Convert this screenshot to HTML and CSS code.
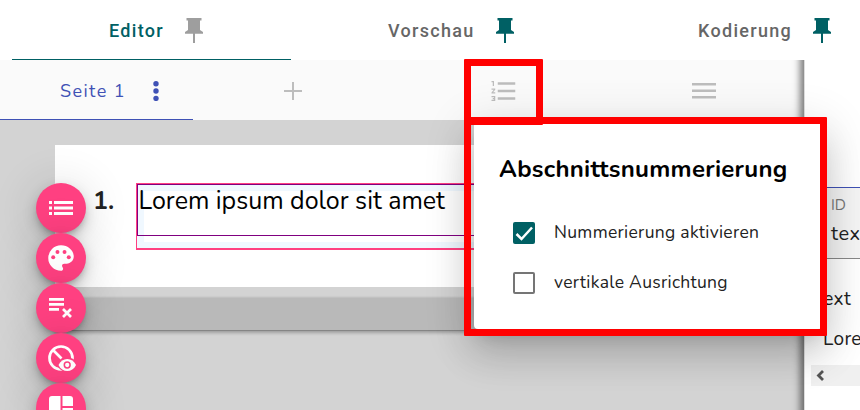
FILE: index.html
```html
<!DOCTYPE html>
<html lang="de">
<head>
<meta charset="utf-8">
<title>Editor</title>
<link rel="stylesheet" href="styles.css">
</head>
<body>
<div class="app">
  <header class="tabs">
    <div class="tab tab-editor active"><span class="label">Editor</span>
      <svg class="pin" viewBox="0 0 18 26"><path d="M1.500 0h15v2.500H15v9.500l3 2v1.800h-8V25H8v-9.200H0V14l3-2V2.500H1.500z"/></svg></div>
    <div class="tab tab-preview"><span class="label">Vorschau</span>
      <svg class="pin" viewBox="0 0 18 26"><path d="M1.500 0h15v2.500H15v9.500l3 2v1.800h-8V25H8v-9.200H0V14l3-2V2.500H1.500z"/></svg></div>
    <div class="tab tab-coding"><span class="label">Kodierung</span>
      <svg class="pin" viewBox="0 0 18 26"><path d="M1.500 0h15v2.500H15v9.500l3 2v1.800h-8V25H8v-9.200H0V14l3-2V2.500H1.500z"/></svg></div>
  </header>
  <main class="workspace">
    <section class="editor">
      <nav class="pages">
        <div class="page-tab"><span class="page-name">Seite 1</span>
          <svg class="dots" viewBox="0 0 6 20"><circle cx="3" cy="2.700" r="2.700"/><circle cx="3" cy="10" r="2.700"/><circle cx="3" cy="17.400" r="2.700"/></svg></div>
        <div class="tool add"><svg width="18" height="18" viewBox="0 0 18 18"><path d="M8 0h2v8h8v2h-8v8H8v-8H0V8h8z"/></svg></div>
        <div class="tool numbering"><svg width="30" height="30" viewBox="0 0 24 24"><path d="M2 17h2v.5H3v1h1v.5H2v1h3v-4H2v1zm1-9h1V4H2v1h1v3zm-1 3h1.800L2 13.100v.9h3v-1H3.200L5 10.900V10H2v1zm5-6v2h14V5H7zm0 14h14v-2H7v2zm0-6h14v-2H7v2z"/></svg></div>
        <div class="tool menu"><svg width="24" height="16" viewBox="0 0 24 16"><path d="M0 0h24v2.500H0zM0 6.500h24V9H0zM0 13h24v2.500H0z"/></svg></div>
      </nav>
      <div class="canvas">
        <div class="sheet">
          <div class="number">1.</div>
          <div class="section"><div class="element">Lorem ipsum dolor sit amet</div></div>
        </div>
        <div class="add-section"></div>
      </div>
    </section>
    <aside class="properties">
      <div class="field"><span class="field-label">ID</span><span class="field-value">text</span></div>
      <div class="prop prop-title">Text</div>
      <div class="prop prop-value">Lorem</div>
      <div class="scrollbar"><svg width="8" height="11" viewBox="0 0 8 11"><path d="M7 1 2.500 5.500 7 10" fill="none" stroke="#555" stroke-width="2.800"/></svg></div>
    </aside>
  </main>

  <div class="fabs">
    <button class="fab"><svg width="24" height="14" viewBox="0 0 24 14"><path d="M0 0h3v3H0zM5 0h19v3H5zM0 5.500h3v3H0zM5 5.500h19v3H5zM0 11h3v3H0zM5 11h19v3H5z"/></svg></button>
    <button class="fab"><svg width="34" height="34" viewBox="0 0 24 24"><path d="M12 3a9 9 0 0 0 0 18c.830 0 1.500-.670 1.500-1.500 0-.390-.150-.740-.390-1.010-.230-.260-.380-.610-.380-.990 0-.830.670-1.500 1.500-1.500H16c2.760 0 5-2.240 5-5 0-4.420-4.030-8-9-8z"/><g class="cut"><circle cx="6.500" cy="11.500" r="1.400"/><circle cx="9.500" cy="7.700" r="1.400"/><circle cx="14.500" cy="7.700" r="1.400"/><circle cx="17.500" cy="11.500" r="1.400"/></g></svg></button>
    <button class="fab"><svg width="24" height="22" viewBox="0 0 24 22"><path d="M0 1h15v2.700H0zM0 6h15v2.700H0zM0 11h10v2.700H0z"/><path class="line" d="m14 12 8 8m0-8-8 8"/></svg></button>
    <button class="fab"><svg class="eye" width="30" height="28" viewBox="0 0 30 28"><circle class="line" cx="14" cy="14" r="11.500"/><path class="line" d="m5.500 5.500 9 9"/><path class="halo" d="M10 21c4-10 17-10 21 0-4 9.500-17 9.500-21 0z"/><path d="M11.500 21c3.500-8 14-8 17.500 0-3.500 8-14 8-17.500 0z"/><circle class="iris" cx="20.200" cy="21" r="2.900"/></svg></button>
    <button class="fab"><svg width="24" height="24" viewBox="0 0 24 24"><path d="M3 0h8.500v24H3a3 3 0 0 1-3-3V3a3 3 0 0 1 3-3zM13.500 0H21a3 3 0 0 1 3 3v7H13.500zM13.500 12H24v9a3 3 0 0 1-3 3h-7.500z"/></svg></button>
  </div>

  <div class="dialog">
    <h2 class="dialog-title">Abschnittsnummerierung</h2>
    <label class="option"><span class="box checked"><svg width="22" height="22" viewBox="0 0 22 22"><path d="m3.500 12 5 5L19 5.500" fill="none" stroke="#fff" stroke-width="2.500"/></svg></span><span class="option-text">Nummerierung aktivieren</span></label>
    <label class="option"><span class="box"></span><span class="option-text">vertikale Ausrichtung</span></label>
  </div>
  <div class="mark mark-dialog"></div>
  <div class="mark mark-button"></div>
</div>
</body>
</html>
```
FILE: styles.css
```css
* { box-sizing: border-box; }
body { margin: 0; background: #fff; font-family: Nunito, Lato, sans-serif; color: #222; }
.app { position: relative; width: 860px; height: 410px; overflow: hidden; }
.tabs { display: flex; height: 60px; background: #fff; font: 500 18px/20px Roboto, sans-serif; letter-spacing: 1.3px; color: #666; }
.tab { display: flex; align-items: center; gap: 21px; height: 60px; padding-top: 2px; flex: none; }
.tab-editor { width: 279px; margin-left: 12px; padding-left: 97px; color: #006064; border-bottom: 1px solid #006064; }
.tab-preview { width: 310px; padding-left: 97px; }
.tab-coding { width: 259px; padding-left: 97px; }
.label { flex: none; }
.pin { width: 18px; height: 26px; fill: #006064; flex: none; }
.tab-editor .pin { fill: #9e9e9e; }
.workspace { display: flex; height: 350px; }
.editor { position: relative; width: 804px; height: 350px; flex: none; background: #d3d3d3; overflow: hidden; }
.editor::after { content: ""; position: absolute; inset: -20px 0 -20px -20px; box-shadow: inset -7px 0 7px -3px rgba(0,0,0,.5); }
.pages { display: flex; height: 60px; background: #fafafa; }
.page-tab { width: 193px; height: 60px; padding: 2px 0 0 60px; display: flex; align-items: center; border-bottom: 1px solid #3f51b5; color: #3f51b5; }
.page-name { width: 93px; font-size: 18px; letter-spacing: 1.4px; }
.dots { width: 6px; height: 20px; fill: #3f51b5; }
.tool { display: flex; align-items: center; justify-content: center; height: 62px; }
.tool svg { fill: #bdbdbd; }
.add { width: 200px; }
.numbering { width: 221px; }
.menu { width: 180px; }
.canvas { padding: 25px 0 0 55px; }
.sheet { display: flex; height: 142px; padding: 38px 0 0 38px; background: #fff; width: 749px; }
.number { width: 43px; font-size: 25px; line-height: 36px; font-weight: 700; }
.section { flex: 1; height: 67px; border: 2px solid #ff4081; border-top-width: 1px; border-left-width: 1px; background: linear-gradient(#fff, #fff) 7px 7px / 700px 51px no-repeat #f0f8ff; }
.element { height: 52px; border: 1px solid #800080; font-size: 25px; line-height: 32px; color: #000; padding-left: .5px; white-space: nowrap; }
.add-section { height: 33px; margin-top: 11px; background: #b9b9b9; border-bottom: 1px solid #858585; box-shadow: 0 2px 3px rgba(0,0,0,.25), 0 -1px 2px rgba(0,0,0,.1); }
.properties { width: 56px; height: 350px; padding: 127px 0 0 6px; overflow: hidden; white-space: nowrap; border-left: 1px solid #ddd; }
.field { height: 72px; border-top: 1px solid #3f51b5; border-bottom: 1px solid #888; background: #f5f5f5; padding: 7px 0 0 20px; display: flex; flex-direction: column; }
.field-label { color: #777; font-size: 15px; line-height: 20px; }
.field-value { font-size: 20px; line-height: 37px; letter-spacing: .5px; }
.prop { font-family: Nunito, "Noto Sans", sans-serif; font-size: 19px; line-height: 26px; letter-spacing: .3px; }
.prop-title { margin: 27px 0 0 2px; }
.prop-value { margin: 14px 0 0 12px; }
.scrollbar { margin-top: 13px; height: 21px; background: #f0f0f0; padding: 5px 5px; line-height: 0; }
.fabs { position: absolute; left: 36px; top: 183px; display: flex; flex-direction: column; }
.fab { width: 50px; height: 50px; padding: 0; border: 0; border-radius: 50%; background: #ff4081; display: flex; align-items: center; justify-content: center; box-shadow: 0 5px 7px -3px rgba(0,0,0,.3), 0 6px 14px 1px rgba(0,0,0,.14), 0 4px 42px 9px rgba(0,0,0,.09); }
.fab svg { fill: #fff; }
.fab .cut, .fab .halo { fill: #ff4081; }
.fab .line { fill: none; stroke: #fff; stroke-width: 2.700; }
.fab .iris { fill: #fff; stroke: #ff4081; stroke-width: 1.500; }
.fab .eye { margin-left: 2px; }
.dialog { position: absolute; left: 474px; top: 122px; width: 348px; height: 207px; padding: 32px 0 0 25px; background: #fff; border-radius: 4px; box-shadow: 0 11px 15px -7px rgba(0,0,0,.2), 0 24px 38px 3px rgba(0,0,0,.14), 0 9px 46px 8px rgba(0,0,0,.12); }
.dialog-title { margin: 0 0 38px; color: #000; font-size: 24px; line-height: 30px; font-weight: 700; letter-spacing: .28px; white-space: nowrap; }
.option { display: flex; align-items: center; height: 22px; margin: 0 0 28px 14px; white-space: nowrap; }
.box { width: 22px; height: 22px; margin-right: 19px; border: 2px solid #757575; border-radius: 2px; }
.box.checked { border: 0; background: #006064; }
.option-text { font-size: 17.500px; line-height: 22px; letter-spacing: .3px; padding-bottom: 2px; }
.mark { position: absolute; border: 7px solid #f00; border-radius: 1px; }
.mark-button { left: 464px; top: 59px; width: 79px; height: 66px; }
.mark-dialog { left: 464px; top: 117px; width: 363px; height: 219px; }
```
